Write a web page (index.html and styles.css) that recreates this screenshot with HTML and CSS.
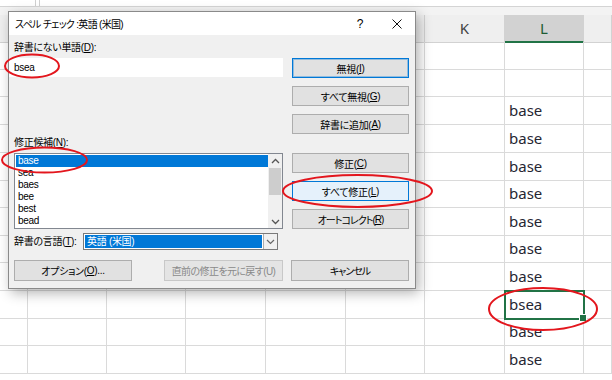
FILE: index.html
```html
<!DOCTYPE html>
<html lang="ja">
  <head>
    <meta charset="UTF-8" />
    <meta name="viewport" content="width=device-width, initial-scale=1.0" />
    <title>スペル チェック</title>
    <link rel="stylesheet" href="styles.css">
  </head>
  <body>
    <div class="sheet">
      <div class="formula-bar"><span class="fx-split"></span></div>
      <div class="header-band"></div>
      <div class="row head">
        <span></span><span></span><span></span><span></span><span></span><span></span><span>K</span><span class="sel">L</span><span></span>
      </div>
      <div class="row"><span></span><span></span><span></span><span></span><span></span><span></span><span></span><span></span><span></span></div>
      <div class="row"><span></span><span></span><span></span><span></span><span></span><span></span><span></span><span></span><span></span></div>
      <div class="row"><span></span><span></span><span></span><span></span><span></span><span></span><span></span><span class="val">base</span><span></span></div>
      <div class="row"><span></span><span></span><span></span><span></span><span></span><span></span><span></span><span class="val">base</span><span></span></div>
      <div class="row"><span></span><span></span><span></span><span></span><span></span><span></span><span></span><span class="val">base</span><span></span></div>
      <div class="row"><span></span><span></span><span></span><span></span><span></span><span></span><span></span><span class="val">base</span><span></span></div>
      <div class="row"><span></span><span></span><span></span><span></span><span></span><span></span><span></span><span class="val">base</span><span></span></div>
      <div class="row"><span></span><span></span><span></span><span></span><span></span><span></span><span></span><span class="val">base</span><span></span></div>
      <div class="row"><span></span><span></span><span></span><span></span><span></span><span></span><span></span><span class="val">base</span><span></span></div>
      <div class="row"><span></span><span></span><span></span><span></span><span></span><span></span><span></span><span class="val cur">bsea</span><span></span></div>
      <div class="row"><span></span><span></span><span></span><span></span><span></span><span></span><span></span><span class="val">base</span><span></span></div>
      <div class="row"><span></span><span></span><span></span><span></span><span></span><span></span><span></span><span class="val">base</span><span></span></div>
    </div>

    <div class="dialog">
      <div class="titlebar">
        <span class="title">スペル チェック :英語 (米国)</span>
        <span class="help">?</span>
        <svg class="close" width="10" height="10" viewBox="0 0 10 10">
          <path d="M0.5 0.5 L9.5 9.5 M9.5 0.5 L0.5 9.5" stroke="#111" stroke-width="1" fill="none" />
        </svg>
      </div>

      <div class="dlg-body">
        <div class="main">
          <div class="left">
            <span class="lbl">辞書にない単語(<u>D</u>):</span>
            <div class="word">bsea</div>

            <span class="lbl lbl-sugg">修正候補(<u>N</u>):</span>
            <div class="listbox">
              <ul class="items">
                <li class="on">base</li>
                <li>sea</li>
                <li>baes</li>
                <li>bee</li>
                <li>best</li>
                <li>bead</li>
              </ul>
              <div class="vscroll">
                <span class="arrow">
                  <svg width="9" height="6" viewBox="0 0 9 6"><polyline points="1,5 4.5,1.5 8,5" fill="none" stroke="#555" stroke-width="1.3" /></svg>
                </span>
                <span class="thumb"></span>
                <span class="arrow down">
                  <svg width="9" height="6" viewBox="0 0 9 6"><polyline points="1,1 4.5,4.5 8,1" fill="none" stroke="#555" stroke-width="1.3" /></svg>
                </span>
              </div>
            </div>

            <div class="lang-row">
              <span class="lbl">辞書の言語(<u>T</u>):</span>
              <div class="combo">
                <span class="combo-val">英語 (米国)</span>
                <span class="combo-btn">
                  <svg width="9" height="6" viewBox="0 0 9 6"><polyline points="1,1 4.5,4.5 8,1" fill="none" stroke="#666" stroke-width="1.2" /></svg>
                </span>
              </div>
            </div>
          </div>

          <div class="right">
            <button class="btn default">無視(<u>I</u>)</button>
            <button class="btn">すべて無視(<u>G</u>)</button>
            <button class="btn">辞書に追加(<u>A</u>)</button>
            <button class="btn btn-gap">修正(<u>C</u>)</button>
            <button class="btn hot">すべて修正(<u>L</u>)</button>
            <button class="btn tight">オートコレクト(<u>R</u>)</button>
          </div>
        </div>

        <div class="bottom">
          <button class="btn opt">オプション(<u>O</u>)...</button>
          <button class="btn undo" disabled>直前の修正を元に戻す(U)</button>
          <button class="btn cancel tight">キャンセル</button>
        </div>
      </div>
    </div>

    <!-- 赤丸の注釈 -->
    <svg class="marks" width="612" height="380" viewBox="0 0 612 380">
      <g fill="none" stroke="#e3161d" stroke-width="2">
        <ellipse cx="32" cy="66" rx="27" ry="11.5" />
        <ellipse cx="44.5" cy="160" rx="42.5" ry="12.5" />
        <ellipse cx="357.5" cy="191" rx="74.5" ry="16" />
        <ellipse cx="543" cy="309" rx="54" ry="21" />
      </g>
    </svg>
  </body>
</html>
```

FILE: styles.css
```css
* {
  box-sizing: border-box;
}
body {
  margin: 0;
  width: 612px;
  height: 380px;
  overflow: hidden;
  position: relative;
  background: #fff;
  font-family: "Noto Sans", "Noto Sans CJK JP", sans-serif;
  color: #000;
}

/* シート */
.formula-bar {
  height: 7px;
  background: #fff;
  border-bottom: 1px solid #d4d4d4;
}
.fx-split {
  display: block;
  margin-left: 35px;
  width: 5px;
  height: 6px;
  border-left: 1px solid #d0d0d0;
  border-right: 1px solid #d0d0d0;
}
.header-band {
  height: 8px;
  background: #f3f3f3;
}
.row {
  display: grid;
  grid-template-columns: 28px 79px 79px 80px 80px 79px 80px 79px 1fr;
  height: 27.65px;
}
.row > span {
  border-right: 1px solid #dadada;
  border-bottom: 1px solid #dadada;
}
.head {
  height: 27px;
  background: #efefef;
}
.head > span {
  border-color: #d2d2d2;
  text-align: center;
  font-size: 15px;
  line-height: 26px;
  color: #444;
}
.head .sel {
  background: #d2d2d2;
  border-bottom: 2px solid #217346;
  color: #1d5c34;
}
.val {
  padding-left: 4px;
  font-size: 15px;
  line-height: 27px;
  color: #262633;
}
.cur {
  position: relative;
  outline: 2px solid #217346;
  outline-offset: -1px;
}
.cur::after {
  content: "";
  position: absolute;
  right: -4px;
  bottom: -4px;
  width: 6px;
  height: 6px;
  background: #217346;
  border: 1px solid #fff;
}

/* ダイアログ */
.dialog {
  position: absolute;
  left: 8px;
  top: 11px;
  width: 408px;
  border: 1px solid #8a8a8a;
  background: #f0f0f0;
  box-shadow: 3px 4px 12px rgba(0, 0, 0, 0.3);
  font-family: "Liberation Sans", "Noto Sans CJK JP", sans-serif;
  font-size: 10px;
  letter-spacing: -0.3px;
  font-feature-settings: "palt";
}
.titlebar {
  height: 23px;
  background: #fff;
  display: flex;
  align-items: center;
  padding: 0 13px 0 6px;
}
.title {
  flex: 1;
  letter-spacing: -0.7px;
}
.help {
  width: 12px;
  text-align: center;
  margin-right: 26px;
  font-size: 12px;
}
.dlg-body {
  padding: 6px 6px 7px 0;
}
.main {
  display: grid;
  grid-template-columns: 274px 117px;
  column-gap: 9px;
}
.lbl {
  display: block;
  height: 14px;
  line-height: 14px;
  margin-left: 5px;
  white-space: nowrap;
}
.word {
  margin-top: 3px;
  height: 19px;
  line-height: 19px;
  background: #fff;
  padding-left: 5px;
}
.lbl-sugg {
  margin-top: 59px;
}
.listbox {
  margin: 3px 0 0 5px;
  height: 76px;
  border: 1px solid #828790;
  background: #fff;
  display: flex;
}
.items {
  list-style: none;
  margin: 0;
  padding: 1px 0 0 1px;
  flex: 1;
}
.items li {
  height: 12px;
  line-height: 12px;
  padding-left: 2px;
}
.items .on {
  background: #0078d7;
  color: #fff;
}
.vscroll {
  width: 14px;
  background: #f0f0f0;
  display: flex;
  flex-direction: column;
  align-items: center;
}
.arrow {
  height: 13px;
  display: flex;
  align-items: center;
  justify-content: center;
}
.arrow.down {
  margin-top: auto;
}
.thumb {
  margin-top: 1px;
  width: 12px;
  height: 27px;
  background: #cdcdcd;
}
.lang-row {
  display: flex;
  align-items: center;
  margin-top: 4px;
  height: 17px;
}
.lang-row .lbl {
  width: 69px;
  flex: none;
}
.combo {
  width: 195px;
  height: 17px;
  border: 1px solid #7a7a7a;
  background: #fff;
  display: flex;
}
.combo-val {
  flex: 1;
  margin: 1px;
  padding-left: 2px;
  background: #0078d7;
  color: #fff;
  line-height: 13px;
}
.combo-btn {
  width: 14px;
  border-left: 1px solid #adadad;
  background: #f0f0f0;
  display: flex;
  align-items: center;
  justify-content: center;
}

/* ボタン */
.right {
  display: flex;
  flex-direction: column;
  gap: 8px;
  padding-top: 17px;
}
.btn {
  height: 20px;
  padding: 0;
  border: 1px solid #adadad;
  background: #e1e1e1;
  font: inherit;
  letter-spacing: inherit;
  color: #000;
  display: flex;
  align-items: center;
  justify-content: center;
  white-space: nowrap;
}
.btn.tight {
  letter-spacing: -1px;
}
.btn-gap {
  margin-top: 11px;
}
.btn.default {
  border-color: #0078d7;
  box-shadow: inset 0 0 0 1px rgba(0, 120, 215, 0.35);
}
.btn.hot {
  background: #e5f1fb;
  border-color: #0078d7;
}
.btn:disabled {
  background: #e4e4e4;
  border-color: #c8c8c8;
  color: #8a8a8a;
}
.bottom {
  display: flex;
  margin-top: 10px;
  padding-left: 5px;
}
.bottom .btn {
  height: 21px;
  width: 118px;
}
.bottom .opt {
  margin-right: 32px;
}
.bottom .undo {
  width: 119px;
  margin-right: 8px;
  letter-spacing: -0.6px;
}

.marks {
  position: absolute;
  left: 0;
  top: 0;
  pointer-events: none;
}
```
